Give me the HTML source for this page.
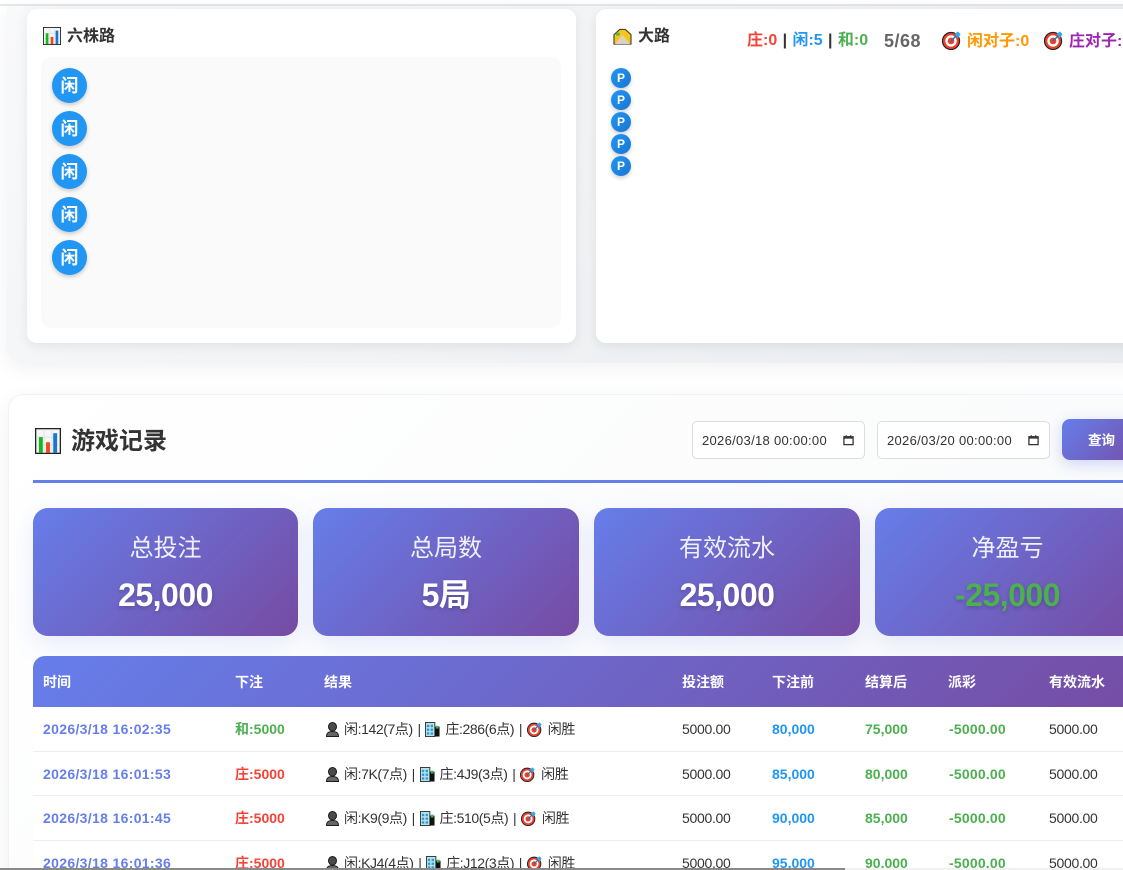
<!DOCTYPE html>
<html lang="zh-CN">
<head>
<meta charset="utf-8">
<title>游戏记录</title>
<style>
*{box-sizing:border-box;margin:0;padding:0}
html,body{width:1123px;height:870px;overflow:hidden;background:#fff}
body{font-family:"Liberation Sans","Noto Sans CJK SC",sans-serif;color:#333}
#w{position:relative;width:1123px;height:870px;overflow:hidden}
.a{position:absolute}
.t{position:absolute;white-space:nowrap;line-height:20px;height:20px}
.topline{left:0;top:4px;width:1123px;height:2px;background:#e6e8ea}
.outer{left:7px;top:6px;width:1140px;height:357px;border-radius:0 0 15px 15px;background:linear-gradient(135deg,#f8f9fa,#e9ecef);box-shadow:0 5px 20px rgba(0,0,0,.06)}
.card{top:9px;height:334px;background:#fff;border-radius:10px;box-shadow:0 3px 12px rgba(0,0,0,.08)}
.inner{left:41px;top:57px;width:520px;height:271px;background:#fafafa;border-radius:10px}
.bead{position:absolute;left:52px;width:35px;height:35px;border-radius:50%;background:#2196f3;color:#fff;font-weight:700;font-size:18px;line-height:36px;text-align:center;box-shadow:0 2px 4px rgba(0,0,0,.2)}
.p{position:absolute;left:611px;width:20px;height:20px;border-radius:50%;background:linear-gradient(135deg,#2196f3,#1976d2);color:#fff;font-weight:700;font-size:12px;line-height:21px;text-align:center;box-shadow:0 2px 4px rgba(0,0,0,.2)}
.h3{font-size:16px;font-weight:700;color:#333}
.st{font-size:16px;font-weight:700}
.st svg{width:19px;height:19px;vertical-align:-4px;margin-right:6px}
.rec{left:8px;top:394px;width:1140px;height:500px;border-radius:15px;background:linear-gradient(135deg,#fff,#f8f9fa);box-shadow:0 8px 25px rgba(0,0,0,.06);border:1px solid #f1f2f3}
.title{font-size:24px;font-weight:700;color:#333;line-height:30px;height:30px}
.inp{position:absolute;top:421px;width:173px;height:38px;background:#fff;border:1px solid #ddd;border-radius:5px;font-size:13px;letter-spacing:.3px;color:#333;line-height:37px;padding-left:9px;white-space:nowrap}
.btn{left:1062px;top:419px;width:90px;height:41px;border-radius:8px;background:linear-gradient(135deg,#667eea,#764ba2);box-shadow:0 4px 15px rgba(102,126,234,.3);color:#fff;font-size:13.500px;font-weight:700;line-height:43px;padding-left:26px;white-space:nowrap}
.line{left:33px;top:480px;width:1100px;height:3px;background:#667eea}
.stat{position:absolute;top:508px;height:128px;border-radius:15px;background:linear-gradient(135deg,#667eea,#764ba2);box-shadow:0 8px 25px rgba(102,126,234,.15);color:#fff;text-align:center}
.stat .l{position:absolute;left:0;right:0;top:25px;font-size:24px;line-height:32px;opacity:.9}
.stat .v{position:absolute;left:0;right:0;top:67px;font-size:32px;letter-spacing:-.5px;line-height:40px;font-weight:700;text-shadow:0 2px 4px rgba(0,0,0,.2)}
.thead{left:33px;top:656px;width:1150px;height:51px;border-radius:12px 12px 0 0;background:linear-gradient(135deg,#667eea,#764ba2)}
.tbody{left:33px;top:707px;width:1100px;height:170px;background:#fff}
.th{color:#fff;font-size:14px;font-weight:700;top:672px}
.row{left:33px;width:1100px;height:1px;background:#eee}
.td{font-size:14px}
.n{letter-spacing:-.3px}
.time{color:#667eea;font-weight:700;letter-spacing:.33px}
.red{color:#f44336;font-weight:700}
.grn{color:#4caf50;font-weight:700}
.pay{letter-spacing:.2px}
.blu{color:#2196f3;font-weight:700}
.res{font-size:14px;color:#333;letter-spacing:-.4px;word-spacing:1.200px}
.res svg{width:15px;height:15px;vertical-align:-3px;margin-right:6px}
.res svg.b{width:13px;margin-right:5px}
.res svg.c{margin-right:5px}
.sb{left:0;top:868px;width:845px;height:2px;background:#8a8a8a}
.sb2{left:845px;top:868px;width:278px;height:2px;background:#f1f1f1}
</style>
</head>
<body>
<div id="w">
<svg width="0" height="0" style="position:absolute">
<defs>
<symbol id="chart" viewBox="0 0 20 20"><rect x=".5" y=".5" width="19" height="19" fill="#f6f6f6" stroke="#222"/><path d="M1 7h18M1 13h18M7 1v18M13 1v18" stroke="#ddd" stroke-width=".6"/><rect x="3" y="7" width="3" height="12" fill="#12b81c"/><rect x="8.500" y="11" width="3" height="8" fill="#f4471f"/><rect x="14" y="4" width="3" height="15" fill="#1478d4"/></symbol>
<symbol id="road" viewBox="0 0 20 18"><path d="M1 7 7 1.500h6L19 7v10H1z" fill="#f5c518" stroke="#4a4030" stroke-width="1.200"/><path d="M2 17 10 7l8 10z" fill="#d9d2bd"/><rect x="3" y="5" width="4" height="3" fill="#5db04f"/></symbol>
<symbol id="tgt" viewBox="0 0 20 20"><circle cx="9.500" cy="10.500" r="9" fill="#e8402c" stroke="#222" stroke-width="1.200"/><circle cx="9.500" cy="10.500" r="6" fill="#fff"/><circle cx="9.500" cy="10.500" r="3.500" fill="#e8402c"/><path d="M9.500 10.500 16 4" stroke="#1c74b8" stroke-width="1.500"/><path d="M13 3l4-2.500 2.500 3L17 7.500z" fill="#35a8e8"/></symbol>
<symbol id="bust" viewBox="0 0 13 15" preserveAspectRatio="none"><ellipse cx="6.500" cy="4.800" rx="4" ry="4.300" fill="#4a4a4a" stroke="#1c1c1c"/><path d="M.5 14.500c0-3.800 2-5 6-5s6 1.200 6 5z" fill="#666" stroke="#1c1c1c"/></symbol>
<symbol id="bldg" viewBox="0 0 16 16"><rect x=".5" y=".5" width="10" height="15" fill="#b7e3e8" stroke="#333"/><rect x="2" y="3" width="2.500" height="2.500" fill="#2a9bd8"/><rect x="6" y="3" width="2.500" height="2.500" fill="#2a9bd8"/><rect x="2" y="7" width="2.500" height="2.500" fill="#2a9bd8"/><rect x="6" y="7" width="2.500" height="2.500" fill="#2a9bd8"/><rect x="2" y="11" width="2.500" height="2.500" fill="#2a9bd8"/><rect x="6" y="11" width="2.500" height="2.500" fill="#2a9bd8"/><rect x="10.500" y="5" width="5" height="10.500" fill="#111"/><rect x="11.500" y="4" width="3" height="3" fill="#3fb54a"/></symbol>
</defs>
</svg>

<div class="a topline"></div>
<div class="a outer"></div>

<div class="a card" style="left:27px;width:549px"></div>
<svg class="a" style="left:43px;top:27px" width="18" height="18"><use href="#chart"/></svg>
<div class="t h3" style="left:67px;top:27px">六株路</div>
<div class="a inner"></div>
<div class="bead" style="top:68px">闲</div>
<div class="bead" style="top:111px">闲</div>
<div class="bead" style="top:154px">闲</div>
<div class="bead" style="top:197px">闲</div>
<div class="bead" style="top:240px">闲</div>

<div class="a card" style="left:596px;width:600px"></div>
<svg class="a" style="left:613px;top:28px" width="19" height="17"><use href="#road"/></svg>
<div class="t h3" style="left:638px;top:27px">大路</div>
<div class="t st" style="left:747px;top:31px;word-spacing:.9px"><span style="color:#f44336">庄:0</span> <span style="color:#333">|</span> <span style="color:#2196f3">闲:5</span> <span style="color:#333">|</span> <span style="color:#4caf50">和:0</span></div>
<div class="t st" style="left:884px;top:31px;color:#666;font-size:18px;letter-spacing:.5px">5/68</div>
<div class="t st" style="left:942px;top:31px;color:#ff9800"><svg><use href="#tgt"/></svg>闲对子:0</div>
<div class="t st" style="left:1044px;top:31px;color:#9c27b0"><svg><use href="#tgt"/></svg>庄对子:0</div>
<div class="p" style="top:68px">P</div>
<div class="p" style="top:90px">P</div>
<div class="p" style="top:112px">P</div>
<div class="p" style="top:134px">P</div>
<div class="p" style="top:156px">P</div>

<div class="a rec"></div>
<svg class="a" style="left:35px;top:428px" width="26" height="26"><use href="#chart"/></svg>
<div class="t title" style="left:71px;top:427px">游戏记录</div>
<div class="inp" style="left:692px">2026/03/18 00:00:00<svg class="a" style="left:150px;top:12px" width="11" height="12" viewBox="0 0 12 12"><path d="M1 2.500h10v8.500H1z" fill="none" stroke="#333" stroke-width="1.400"/><path d="M1 2h10v2.500H1z" fill="#333"/><path d="M3.500.5v2M8.500.5v2" stroke="#333"/></svg></div>
<div class="inp" style="left:877px">2026/03/20 00:00:00<svg class="a" style="left:150px;top:12px" width="11" height="12" viewBox="0 0 12 12"><path d="M1 2.500h10v8.500H1z" fill="none" stroke="#333" stroke-width="1.400"/><path d="M1 2h10v2.500H1z" fill="#333"/><path d="M3.500.5v2M8.500.5v2" stroke="#333"/></svg></div>
<div class="a btn">查询</div>
<div class="a line"></div>

<div class="stat" style="left:33px;width:265px"><div class="l">总投注</div><div class="v">25,000</div></div>
<div class="stat" style="left:313px;width:266px"><div class="l">总局数</div><div class="v">5局</div></div>
<div class="stat" style="left:594px;width:266px"><div class="l">有效流水</div><div class="v">25,000</div></div>
<div class="stat" style="left:875px;width:265px"><div class="l">净盈亏</div><div class="v" style="color:#4caf50">-25,000</div></div>

<div class="a tbody"></div>
<div class="a thead"></div>
<div class="t th" style="left:43px">时间</div>
<div class="t th" style="left:235px">下注</div>
<div class="t th" style="left:324px">结果</div>
<div class="t th" style="left:682px">投注额</div>
<div class="t th" style="left:772px">下注前</div>
<div class="t th" style="left:865px">结算后</div>
<div class="t th" style="left:948px">派彩</div>
<div class="t th" style="left:1049px">有效流水</div>

<div class="a row" style="top:751px"></div>
<div class="a row" style="top:795px"></div>
<div class="a row" style="top:840px"></div>

<div class="t td time" style="left:43px;top:719px">2026/3/18 16:02:35</div>
<div class="t td grn" style="left:235px;top:719px">和:5000</div>
<div class="t res" style="left:326px;top:719px"><svg class="b"><use href="#bust"/></svg>闲:142(7点) | <svg class="c"><use href="#bldg"/></svg>庄:286(6点) | <svg><use href="#tgt"/></svg>闲胜</div>
<div class="t td n" style="left:682px;top:719px">5000.00</div>
<div class="t td blu" style="left:772px;top:719px">80,000</div>
<div class="t td grn" style="left:865px;top:719px">75,000</div>
<div class="t td grn pay" style="left:949px;top:719px">-5000.00</div>
<div class="t td n" style="left:1049px;top:719px">5000.00</div>

<div class="t td time" style="left:43px;top:764px">2026/3/18 16:01:53</div>
<div class="t td red" style="left:235px;top:764px">庄:5000</div>
<div class="t res" style="left:326px;top:764px"><svg class="b"><use href="#bust"/></svg>闲:7K(7点) | <svg class="c"><use href="#bldg"/></svg>庄:4J9(3点) | <svg><use href="#tgt"/></svg>闲胜</div>
<div class="t td n" style="left:682px;top:764px">5000.00</div>
<div class="t td blu" style="left:772px;top:764px">85,000</div>
<div class="t td grn" style="left:865px;top:764px">80,000</div>
<div class="t td grn pay" style="left:949px;top:764px">-5000.00</div>
<div class="t td n" style="left:1049px;top:764px">5000.00</div>

<div class="t td time" style="left:43px;top:808px">2026/3/18 16:01:45</div>
<div class="t td red" style="left:235px;top:808px">庄:5000</div>
<div class="t res" style="left:326px;top:808px"><svg class="b"><use href="#bust"/></svg>闲:K9(9点) | <svg class="c"><use href="#bldg"/></svg>庄:510(5点) | <svg><use href="#tgt"/></svg>闲胜</div>
<div class="t td n" style="left:682px;top:808px">5000.00</div>
<div class="t td blu" style="left:772px;top:808px">90,000</div>
<div class="t td grn" style="left:865px;top:808px">85,000</div>
<div class="t td grn pay" style="left:949px;top:808px">-5000.00</div>
<div class="t td n" style="left:1049px;top:808px">5000.00</div>

<div class="t td time" style="left:43px;top:853px">2026/3/18 16:01:36</div>
<div class="t td red" style="left:235px;top:853px">庄:5000</div>
<div class="t res" style="left:326px;top:853px"><svg class="b"><use href="#bust"/></svg>闲:KJ4(4点) | <svg class="c"><use href="#bldg"/></svg>庄:J12(3点) | <svg><use href="#tgt"/></svg>闲胜</div>
<div class="t td n" style="left:682px;top:853px">5000.00</div>
<div class="t td blu" style="left:772px;top:853px">95,000</div>
<div class="t td grn" style="left:865px;top:853px">90,000</div>
<div class="t td grn pay" style="left:949px;top:853px">-5000.00</div>
<div class="t td n" style="left:1049px;top:853px">5000.00</div>

<div class="a sb2"></div>
<div class="a sb"></div>
</div>
</body>
</html>
